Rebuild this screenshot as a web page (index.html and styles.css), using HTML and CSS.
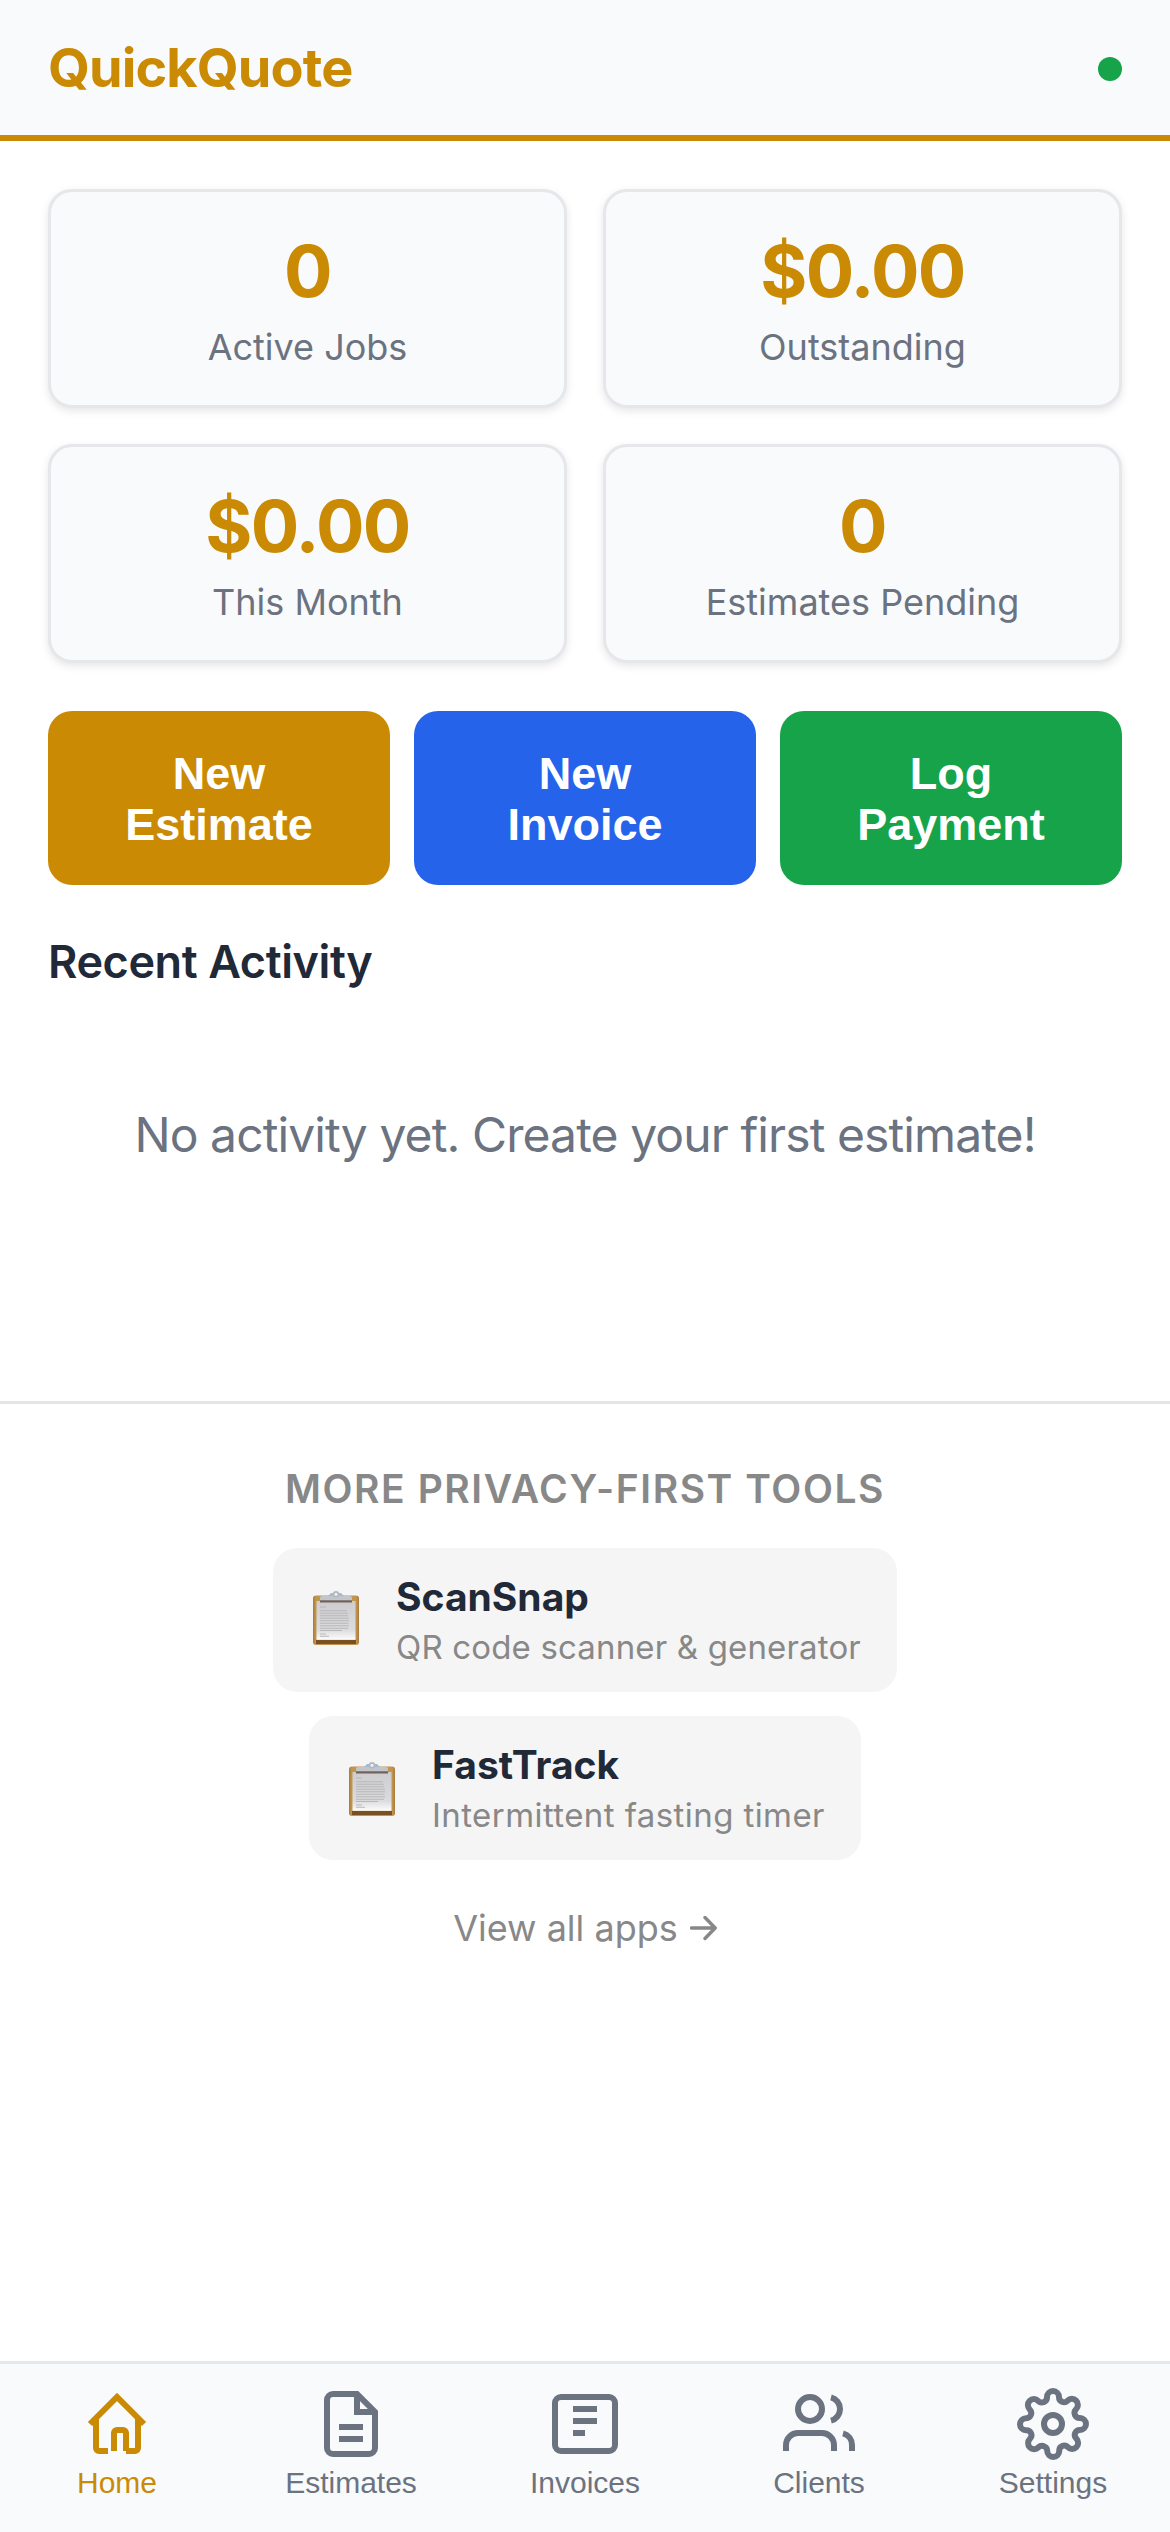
FILE: index.html
```html
<!DOCTYPE html>
<html lang="en">
<head>
<meta charset="UTF-8">
<title>QuickQuote</title>
<link rel="stylesheet" href="styles.css">
</head>
<body>

<header class="header">
  <h1 class="logo">QuickQuote</h1>
  <span class="status-dot"></span>
</header>

<main class="main">
  <div class="stats">
    <div class="stat-card">
      <div class="stat-value">0</div>
      <div class="stat-label">Active Jobs</div>
    </div>
    <div class="stat-card">
      <div class="stat-value">$0.00</div>
      <div class="stat-label">Outstanding</div>
    </div>
    <div class="stat-card">
      <div class="stat-value">$0.00</div>
      <div class="stat-label">This Month</div>
    </div>
    <div class="stat-card">
      <div class="stat-value">0</div>
      <div class="stat-label">Estimates Pending</div>
    </div>
  </div>

  <div class="actions">
    <button class="btn btn-estimate">New<br>Estimate</button>
    <button class="btn btn-invoice">New<br>Invoice</button>
    <button class="btn btn-payment">Log<br>Payment</button>
  </div>

  <h2 class="section-title">Recent Activity</h2>
  <p class="empty">No activity yet. Create your first estimate!</p>
</main>

<!-- clipboard picture shared by the app cards -->
<svg class="defs" width="0" height="0">
  <defs>
    <linearGradient id="paper" x1="0" y1="0" x2="0" y2="1">
      <stop offset="0" stop-color="#cdcdcf"/>
      <stop offset="0.75" stop-color="#dcdcde"/>
      <stop offset="1" stop-color="#fbfbfb"/>
    </linearGradient>
    <linearGradient id="wood" x1="0" y1="0" x2="1" y2="0">
      <stop offset="0" stop-color="#a97a3d"/>
      <stop offset="0.06" stop-color="#c2954f"/>
      <stop offset="0.94" stop-color="#c2954f"/>
      <stop offset="1" stop-color="#a97a3d"/>
    </linearGradient>
    <symbol id="clipboard" viewBox="0 0 54 54">
      <rect x="4" y="4.5" width="46" height="49.5" rx="3" fill="url(#wood)"/>
      <rect x="7" y="48.5" width="40" height="4.5" fill="#7b5021"/>
      <rect x="7.5" y="10" width="39" height="38.5" fill="url(#paper)"/>
      <path d="M7.5 48.2h39" stroke="#fff" stroke-width="1"/>
      <g stroke="#b8b8ba" stroke-width="1.1">
        <path d="M11 16h6M11 19.7h27M11 22.2h28M11 24.7h28M11 27.2h29M11 29.7h29M11 32.2h28.5M11 34.7h29M11 37.2h28M11 39.5h22M11 43h6M11 45.3h9"/>
      </g>
      <path d="M19 5l3-3h10l3 3z" fill="#9dbbdc"/>
      <path d="M13 5h28a2 2 0 0 1 2 2v3H11V7a2 2 0 0 1 2-2z" fill="#c2c5c9"/>
      <rect x="11" y="9.3" width="32" height="2.2" fill="#70625b"/>
      <circle cx="27" cy="3.3" r="2.4" fill="#f1f1f2" stroke="#b4b8bd" stroke-width="1.6"/>
    </symbol>
  </defs>
</svg>

<footer class="more">
  <h3 class="more-title">MORE PRIVACY-FIRST TOOLS</h3>
  <a class="app-card">
    <svg class="app-icon"><use href="#clipboard"/></svg>
    <div>
      <div class="app-name">ScanSnap</div>
      <div class="app-desc">QR code scanner &amp; generator</div>
    </div>
  </a>
  <a class="app-card">
    <svg class="app-icon app-icon-low"><use href="#clipboard"/></svg>
    <div>
      <div class="app-name">FastTrack</div>
      <div class="app-desc app-desc-wide">Intermittent fasting timer</div>
    </div>
  </a>
  <a class="more-link">View all apps <svg class="arrow" viewBox="0 0 27 28"><path d="M1.5 14H25M15 3.5L25.2 14L15 24.5"/></svg></a>
</footer>

<nav class="nav">
  <a class="nav-item active">
    <svg class="nav-icon" viewBox="0 0 24 24"><path d="M3 12l9-9 9 9M5 10v10a1 1 0 0 0 1 1h3M19 10v10a1 1 0 0 1-1 1h-3M11 21v-6a1 1 0 0 1 1-1h2a1 1 0 0 1 1 1v6"/></svg>
    <span>Home</span>
  </a>
  <a class="nav-item">
    <svg class="nav-icon" viewBox="0 0 24 24"><path d="M14 2H6a2 2 0 0 0-2 2v16a2 2 0 0 0 2 2h12a2 2 0 0 0 2-2V8z"/><path d="M14 2v6h6M8 13h8M8 17h8"/></svg>
    <span>Estimates</span>
  </a>
  <a class="nav-item">
    <svg class="nav-icon" viewBox="0 0 24 24"><rect x="2" y="3" width="20" height="18" rx="2"/><path d="M8 7h8M8 11h8M8 15h4"/></svg>
    <span>Invoices</span>
  </a>
  <a class="nav-item">
    <svg class="nav-icon" viewBox="0 0 24 24"><path d="M17 21v-2a4 4 0 0 0-4-4H5a4 4 0 0 0-4 4v2"/><circle cx="9" cy="7" r="4"/><path d="M23 21v-2a4 4 0 0 0-3-3.87M16 3.13a4 4 0 0 1 0 7.75"/></svg>
    <span>Clients</span>
  </a>
  <a class="nav-item">
    <svg class="nav-icon" viewBox="0 0 24 24"><circle cx="12" cy="12" r="3"/><path d="M19.4 15a1.65 1.65 0 0 0 .33 1.82l.06.06a2 2 0 0 1 0 2.83 2 2 0 0 1-2.83 0l-.06-.06a1.65 1.65 0 0 0-1.82-.33 1.65 1.65 0 0 0-1 1.51V21a2 2 0 0 1-2 2 2 2 0 0 1-2-2v-.09A1.65 1.65 0 0 0 9 19.4a1.65 1.65 0 0 0-1.82.33l-.06.06a2 2 0 0 1-2.83 0 2 2 0 0 1 0-2.83l.06-.06a1.65 1.65 0 0 0 .33-1.82 1.65 1.65 0 0 0-1.51-1H3a2 2 0 0 1-2-2 2 2 0 0 1 2-2h.09A1.65 1.65 0 0 0 4.6 9a1.65 1.65 0 0 0-.33-1.82l-.06-.06a2 2 0 0 1 0-2.83 2 2 0 0 1 2.83 0l.06.06a1.65 1.65 0 0 0 1.82.33H9a1.65 1.65 0 0 0 1-1.51V3a2 2 0 0 1 2-2 2 2 0 0 1 2 2v.09a1.65 1.65 0 0 0 1 1.51 1.65 1.65 0 0 0 1.82-.33l.06-.06a2 2 0 0 1 2.83 0 2 2 0 0 1 0 2.83l-.06.06a1.65 1.65 0 0 0-.33 1.82V9a1.65 1.65 0 0 0 1.51 1H21a2 2 0 0 1 2 2 2 2 0 0 1-2 2h-.09a1.65 1.65 0 0 0-1.51 1z"/></svg>
    <span>Settings</span>
  </a>
</nav>

</body>
</html>
```
FILE: styles.css
```css
* {
  box-sizing: border-box;
  margin: 0;
  padding: 0;
}

body {
  display: flex;
  flex-direction: column;
  height: 2532px;
  background: #fff;
  color: #1f2937;
  font-family: Inter, "Liberation Sans", sans-serif;
  overflow: hidden;
}

.defs {
  position: absolute;
}

.header {
  display: flex;
  justify-content: space-between;
  align-items: center;
  height: 141px;
  padding: 0 48px;
  background: #f9fafb;
  border-bottom: 6px solid #ca8a04;
}

.logo {
  font-size: 54px;
  font-weight: 700;
  letter-spacing: -0.9px;
  color: #ca8a04;
}

.status-dot {
  width: 24px;
  height: 24px;
  margin-top: 3px;
  border-radius: 50%;
  background: #16a34a;
}

.main {
  padding: 48px 48px 0;
}

.stats {
  display: grid;
  grid-template-columns: 1fr 1fr;
  gap: 36px;
  margin-bottom: 48px;
}

.stat-card {
  padding: 36px;
  background: #f9fafb;
  border: 3px solid #e5e7eb;
  border-radius: 24px;
  box-shadow: 0 3px 9px rgba(0, 0, 0, 0.1);
  text-align: center;
}

.stat-value {
  font-size: 72px;
  line-height: 86px;
  font-weight: 700;
  letter-spacing: -1.6px;
  color: #ca8a04;
}

.stat-label {
  margin-top: 12px;
  font-size: 36px;
  line-height: 43px;
  color: #6b7280;
}

.actions {
  display: grid;
  grid-template-columns: repeat(3, 1fr);
  gap: 24px;
}

.btn {
  padding: 37px 0 35px;
  border: none;
  border-radius: 24px;
  color: #fff;
  font-family: "Liberation Sans", Arial, sans-serif;
  font-size: 45px;
  line-height: 51px;
  font-weight: 700;
}

.btn-estimate {
  background: #ca8a04;
}

.btn-invoice {
  background: #2563eb;
}

.btn-payment {
  background: #16a34a;
}

.section-title {
  margin-top: 48px;
  font-size: 45px;
  line-height: 57px;
  font-weight: 600;
  letter-spacing: -0.4px;
}

.empty {
  padding: 116px 0 238px;
  font-size: 48px;
  line-height: 57px;
  letter-spacing: -0.9px;
  color: #6b7280;
  text-align: center;
}

.more {
  display: flex;
  flex-direction: column;
  align-items: center;
  flex: 1;
  padding-top: 61px;
  border-top: 3px solid #e5e5e5;
  color: #888;
}

.more-title {
  margin-bottom: 35px;
  font-size: 39px;
  line-height: 48px;
  font-weight: 600;
  letter-spacing: 1.56px;
}

.app-card {
  display: flex;
  align-items: center;
  height: 144px;
  margin-bottom: 24px;
  padding: 0 36px;
  border-radius: 24px;
  background: #f5f5f5;
}

.app-icon {
  width: 54px;
  height: 54px;
  margin: -4px 33px 0 0;
}

.app-icon-low {
  margin-top: 2px;
}

.app-name {
  font-size: 39px;
  line-height: 48px;
  font-weight: 700;
  color: #1f2937;
}

.app-desc {
  margin-top: 6px;
  font-size: 33px;
  line-height: 40px;
  letter-spacing: 0.16px;
}

.app-desc-wide {
  letter-spacing: 0.42px;
}

.more-link {
  margin-top: 23px;
  font-size: 36px;
  line-height: 43px;
}

.arrow {
  width: 27px;
  height: 28px;
  margin-left: 2px;
  vertical-align: -1px;
  fill: none;
  stroke: #888;
  stroke-width: 3.4;
  stroke-linecap: round;
  stroke-linejoin: round;
}

.nav {
  display: flex;
  height: 171px;
  padding-top: 24px;
  background: #f9fafb;
  border-top: 3px solid #e5e7eb;
  font-family: "Liberation Sans", Arial, sans-serif;
  font-size: 30px;
  line-height: 34px;
}

.nav-item {
  display: flex;
  flex: 1;
  flex-direction: column;
  align-items: center;
  gap: 6px;
  color: #6b7280;
}

.nav-item.active {
  color: #ca8a04;
}

.nav-icon {
  width: 72px;
  height: 72px;
  fill: none;
  stroke: currentColor;
  stroke-width: 2;
}
```
